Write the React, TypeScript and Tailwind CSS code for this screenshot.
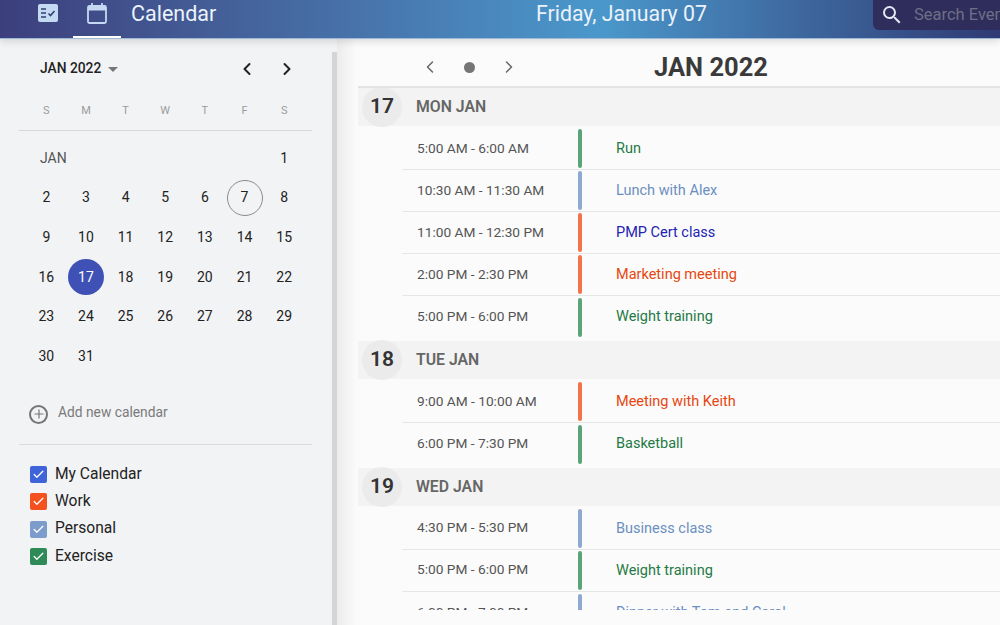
import React from 'react';
import { ChevronLeft, ChevronRight, Check, Plus } from 'lucide-react';

const weeks: (number | null)[][] = [
  [null, null, null, null, null, null, 1],
  [2, 3, 4, 5, 6, 7, 8],
  [9, 10, 11, 12, 13, 14, 15],
  [16, 17, 18, 19, 20, 21, 22],
  [23, 24, 25, 26, 27, 28, 29],
  [30, 31, null, null, null, null, null],
];

const calendars = [
  { name: 'My Calendar', color: 'bg-[#3f63d8]' },
  { name: 'Work', color: 'bg-[#f4511e]' },
  { name: 'Personal', color: 'bg-[#7c9ccb]' },
  { name: 'Exercise', color: 'bg-[#2e8b57]' },
];

const green = { bar: 'bg-[#5aa477]', text: 'text-[#1f7a45]' };
const blue = { bar: 'bg-[#8ea8d2]', text: 'text-[#6c8fc0]' };
const orange = { bar: 'bg-[#f4734a]', text: 'text-[#e6460f]' };
const navy = { bar: 'bg-[#f4734a]', text: 'text-[#2323b4]' };

const days = [
  {
    num: 17,
    label: 'MON JAN',
    events: [
      { time: '5:00 AM - 6:00 AM', title: 'Run', ...green },
      { time: '10:30 AM - 11:30 AM', title: 'Lunch with Alex', ...blue },
      { time: '11:00 AM - 12:30 PM', title: 'PMP Cert class', ...navy },
      { time: '2:00 PM - 2:30 PM', title: 'Marketing meeting', ...orange },
      { time: '5:00 PM - 6:00 PM', title: 'Weight training', ...green },
    ],
  },
  {
    num: 18,
    label: 'TUE JAN',
    events: [
      { time: '9:00 AM - 10:00 AM', title: 'Meeting with Keith', ...orange },
      { time: '6:00 PM - 7:30 PM', title: 'Basketball', ...green },
    ],
  },
  {
    num: 19,
    label: 'WED JAN',
    events: [
      { time: '4:30 PM - 5:30 PM', title: 'Business class', ...blue },
      { time: '5:00 PM - 6:00 PM', title: 'Weight training', ...green },
      { time: '6:00 PM - 7:00 PM', title: 'Dinner with Tom and Carol', ...blue },
    ],
  },
];

const TasksIcon = () => (
  <svg width="20" height="18" viewBox="0 0 20 18">
    <rect width="20" height="18" rx="2" fill="#c4daf3" />
    <path d="M3 5h5M3 9h5M3 13h5" stroke="#34406f" strokeWidth="1.6" />
    <path d="M10.5 9.5l2 2 4-4.5" stroke="#34406f" strokeWidth="1.6" fill="none" />
  </svg>
);

const CalendarIcon = () => (
  <svg width="20" height="21" viewBox="0 0 20 21" fill="none">
    <rect x="1" y="3" width="18" height="17" rx="1.5" stroke="#c4daf3" strokeWidth="1.8" />
    <rect x="1" y="3" width="18" height="4.5" fill="#c4daf3" />
    <path d="M5 0v4M15 0v4" stroke="#c4daf3" strokeWidth="1.8" />
  </svg>
);

const SearchIcon = () => (
  <svg width="24" height="24" viewBox="0 0 24 24" fill="#dfe8f3" className="shrink-0">
    <path d="M15.5 14h-.79l-.28-.27A6.471 6.471 0 0 0 16 9.5 6.5 6.5 0 1 0 9.5 16c1.61 0 3.09-.59 4.23-1.57l.27.28v.79l5 4.99L20.49 19l-4.99-5zm-6 0C7.01 14 5 11.99 5 9.5S7.01 5 9.5 5 14 7.01 14 9.5 11.99 14 9.5 14z" />
  </svg>
);

const Sidebar = () => (
  <aside className="w-[337px] shrink-0 flex">
    <div className="w-[332px] shrink-0 pl-[18.5px] pr-[20px] bg-[#f2f3f5]">
      <div className="h-[59px] flex items-center pl-[21.5px]">
        <span className="text-[13.8px] font-medium text-[#222]">JAN 2022</span>
        <span className="ml-[7px] mt-[2px] w-0 h-0 border-x-[5px] border-x-transparent border-t-[5px] border-t-[#777]" />
        <ChevronLeft size={20} strokeWidth={2.4} className="ml-[119px] text-[#222]" />
        <ChevronRight size={20} strokeWidth={2.4} className="ml-[20px] text-[#222]" />
      </div>
      <div className="h-[33px] border-b border-[#d5d7da] px-[8px] grid grid-cols-7 items-start">
        {['S', 'M', 'T', 'W', 'T', 'F', 'S'].map((d, i) => (
          <span key={i} className="text-center text-[11px] leading-[26px] text-[#9b9b9b]">{d}</span>
        ))}
      </div>
      <div className="pt-[7.5px] px-[8px]">
        {weeks.map((w, r) => (
          <div key={r} className="grid grid-cols-7 h-[39.6px] items-center relative">
            {r === 0 && <span className="absolute left-[13.5px] text-[14px] text-[#555]">JAN</span>}
            {w.map((d, i) => (
              <div key={i} className="flex justify-center">
                {d === 17 ? (
                  <span className="w-[36px] h-[36px] rounded-full bg-[#3f51b5] text-white text-[14px] flex items-center justify-center">{d}</span>
                ) : d === 7 ? (
                  <span className="w-[36px] h-[36px] rounded-full border border-[#8a8a8a] text-[#222] text-[14px] flex items-center justify-center">{d}</span>
                ) : (
                  <span className="text-[14px] text-[#222]">{d}</span>
                )}
              </div>
            ))}
          </div>
        ))}
      </div>
      <div className="h-[60px] mt-[8.5px] border-b border-[#d8dadd] flex items-start pl-[10.5px] pt-[19px] gap-[10px]">
        <span className="w-[19px] h-[19px] mt-[1px] rounded-full border-2 border-[#757575] flex items-center justify-center">
          <Plus size={14} strokeWidth={2} className="text-[#757575]" />
        </span>
        <span className="-mt-[1px] text-[13.8px] leading-[18px] text-[#7a7a7a]">Add new calendar</span>
      </div>
      <div className="pt-[16px] pl-[11.5px]">
        {calendars.map((c) => (
          <div key={c.name} className="h-[27.4px] flex items-center gap-[8px]">
            <span className={`w-[17px] h-[17px] rounded-[2px] flex items-center justify-center ${c.color}`}>
              <Check size={13} strokeWidth={2.4} className="text-white" />
            </span>
            <span className="text-[15.6px] text-[#222]">{c.name}</span>
          </div>
        ))}
      </div>
    </div>
    <div className="flex-1 pt-[13px] bg-[#f2f3f5]">
      <div className="h-full bg-[#d4d5d7]" />
    </div>
  </aside>
);

const Agenda = () => (
  <main className="flex-1 min-w-0 bg-[#fbfbfb] bg-gradient-to-r from-[#ececec] to-[#fbfbfb] to-[3%]">
    <div className="h-[49px] pt-[9px] border-b-2 border-[#e3e3e3] ml-[21px] flex items-center">
      <ChevronLeft size={20} strokeWidth={1.8} className="ml-[62px] text-[#666]" />
      <span className="ml-[24px] w-[11px] h-[11px] rounded-full bg-[#757575]" />
      <ChevronRight size={20} strokeWidth={1.8} className="ml-[24px] text-[#666]" />
      <span className="ml-[135px] text-[25.5px] font-bold text-[#3a3a3a]">JAN 2022</span>
    </div>
    <div className="h-[522px] overflow-hidden ml-[21px]">
      {days.map((day) => (
        <section key={day.num} className="pb-[2.7px]">
          <div className="h-[38px] bg-[#f3f3f3] flex items-center pl-[4px] mb-[2.3px]">
            <span className="w-[40px] h-[40px] rounded-full bg-[#ebebeb] flex items-center justify-center text-[21px] font-semibold text-[#333]">{day.num}</span>
            <span className="ml-[14px] text-[15.8px] font-semibold text-[#666]">{day.label}</span>
          </div>
          <div className="ml-[44px]">
            {day.events.map((ev, i) => (
              <div key={i} className="h-[42px] border-b border-[#e6e6e6] flex items-center last:border-b-0">
                <span className="w-[176px] pl-[15px] mb-[2px] text-[13.7px] text-[#555] whitespace-nowrap">{ev.time}</span>
                <span className={`w-[4px] h-[39px] rounded-[2px] ${ev.bar}`} />
                <span className={`ml-[34px] text-[14.5px] ${ev.text}`}>{ev.title}</span>
              </div>
            ))}
          </div>
        </section>
      ))}
    </div>
  </main>
);

export default function App() {
  return (
    <div className="w-[1000px] h-[625px] overflow-hidden flex flex-col bg-[#fbfbfb] font-['Roboto',sans-serif]">
      <header className="relative z-10 h-[39px] shrink-0 flex items-start bg-gradient-to-r from-[#3c3f7c] via-[#4a98cb] via-60% to-[#2f3a74] text-white border-b border-[#9dbbd8] shadow-[0_2px_8px_rgba(0,0,0,0.15)]">
        <div className="w-[536px] shrink-0 flex items-start">
          <span className="ml-[38px] mt-[4px]"><TasksIcon /></span>
          <div className="ml-[15px] w-[48px] h-[38px] border-b-2 border-white flex justify-center pt-[3px]">
            <CalendarIcon />
          </div>
          <span className="ml-[10px] text-[21.5px] leading-[27px] text-[#eaf2fb]">Calendar</span>
        </div>
        <div className="w-[337px] shrink-0 text-[21.3px] leading-[27px] text-[#eaf2fb]">Friday, January 07</div>
        <div className="flex-1 h-[30px] rounded-bl-[6px] bg-[#2e2d5c] flex items-center pl-[7px] gap-[10px] overflow-hidden">
          <SearchIcon />
          <span className="text-[16.5px] text-[#6f6f85] whitespace-nowrap">Search Events</span>
        </div>
      </header>
      <div className="flex flex-1 min-h-0">
        <Sidebar />
        <Agenda />
      </div>
    </div>
  );
}
